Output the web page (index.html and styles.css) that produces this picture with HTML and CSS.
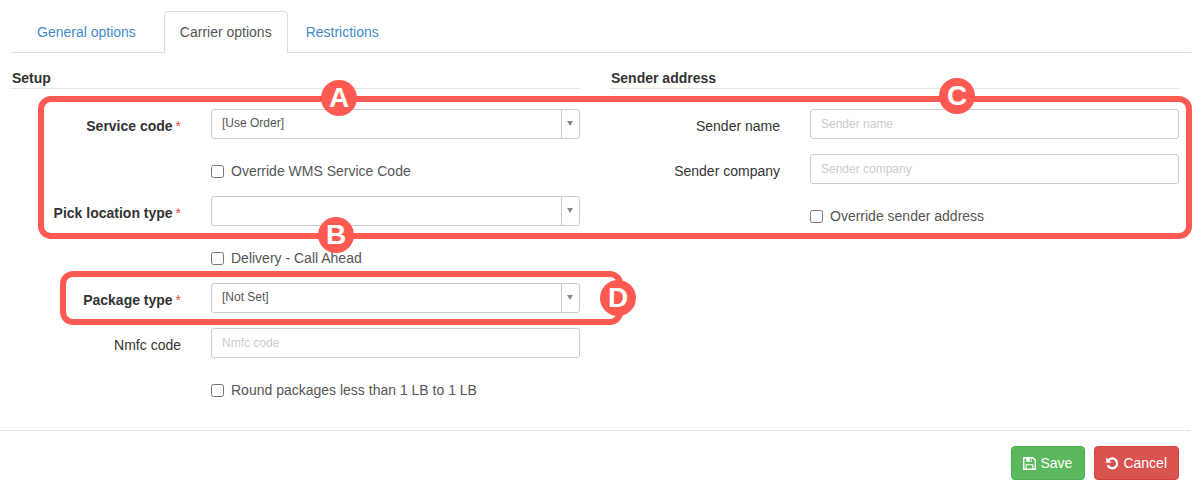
FILE: index.html
```html
<!DOCTYPE html>
<html lang="en">
<head>
<meta charset="utf-8">
<title>Carrier options</title>
<link rel="stylesheet" href="styles.css">
</head>
<body>
<div class="page">
  <nav class="tabs">
    <a class="tab tab-first" href="#">General options</a>
    <a class="tab active" href="#">Carrier options</a>
    <a class="tab" href="#">Restrictions</a>
  </nav>
  <div class="columns">
    <section class="col">
      <h3 class="section-title">Setup</h3>
      <div class="row">
        <label class="lbl req">Service code <span class="star">*</span></label>
        <div class="select"><span class="value">[Use Order]</span><span class="arrow"></span></div>
      </div>
      <div class="row check-row"><div></div><label class="check"><input type="checkbox"><span>Override WMS Service Code</span></label></div>
      <div class="row">
        <label class="lbl req">Pick location type <span class="star">*</span></label>
        <div class="select"><span class="value"></span><span class="arrow"></span></div>
      </div>
      <div class="row check-row"><div></div><label class="check"><input type="checkbox"><span>Delivery - Call Ahead</span></label></div>
      <div class="row">
        <label class="lbl req">Package type <span class="star">*</span></label>
        <div class="select"><span class="value">[Not Set]</span><span class="arrow"></span></div>
      </div>
      <div class="row">
        <label class="lbl">Nmfc code</label>
        <input class="text" type="text" placeholder="Nmfc code">
      </div>
      <div class="row check-row"><div></div><label class="check"><input type="checkbox"><span>Round packages less than 1 LB to 1 LB</span></label></div>
    </section>
    <section class="col">
      <h3 class="section-title">Sender address</h3>
      <div class="row">
        <label class="lbl">Sender name</label>
        <input class="text" type="text" placeholder="Sender name">
      </div>
      <div class="row">
        <label class="lbl">Sender company</label>
        <input class="text" type="text" placeholder="Sender company">
      </div>
      <div class="row check-row"><div></div><label class="check"><input type="checkbox"><span>Override sender address</span></label></div>
    </section>
  </div>
  <footer class="footer">
    <button class="btn btn-save" type="button">
      <svg class="icon" viewBox="0 0 12 12" aria-hidden="true"><path fill="none" stroke="#fff" stroke-width="1.3" d="M.7.7h8.4l2.2 2.2v8.4H.7z"/><path fill="#fff" d="M3 .7h5v3.6H3zM2.4 6.6h7.2v4.8H2.4z"/><path fill="#5cb85c" d="M6.2 1.3h1.2v2.4H6.2zM3.4 7.6h5.2v3H3.4z"/></svg>Save
    </button>
    <button class="btn btn-cancel" type="button">
      <svg class="icon" viewBox="0 0 12 12" aria-hidden="true"><path fill="none" stroke="#fff" stroke-width="2.1" d="M2.2 3.1A4.5 4.5 0 1 1 1.6 7.6"/><path fill="#fff" d="M.2.4l5 5H.2z"/></svg>Cancel
    </button>
  </footer>
  <div class="mark mark-abc"></div>
  <div class="mark mark-d"></div>
  <span class="badge badge-a">A</span>
  <span class="badge badge-b">B</span>
  <span class="badge badge-c">C</span>
  <span class="badge badge-d">D</span>
</div>
</body>
</html>
```
FILE: styles.css
```css
* { box-sizing: border-box; }
html, body { margin: 0; padding: 0; background: #fff; }
body { font-family: "Liberation Sans", Arial, sans-serif; font-size: 14px; color: #333; }
.page { position: relative; width: 1203px; height: 499px; overflow: hidden; }

.tabs { display: flex; align-items: flex-end; width: 1180px; height: 42px; margin: 11px 0 0 11px; padding-left: 10px; border-bottom: 1px solid #ddd; }
.tab { display: block; height: 41px; margin-right: 2px; padding: 0 15px; line-height: 41px; color: #428bca; text-decoration: none; border: 1px solid transparent; border-bottom: 0; border-radius: 4px 4px 0 0; }
.tab-first { margin-right: 12px; }
.tab.active { height: 42px; margin-bottom: -1px; background: #fff; color: #555; border-color: #ddd; }

.columns { display: flex; gap: 30px; margin-left: 11px; }
.col { width: 569px; }
.section-title { height: 36px; margin: 0 0 20px; padding: 17px 0 0 1px; font-size: 14px; line-height: 16px; font-weight: 700; color: #333; border-bottom: 1px solid #e5e5e5; }

.row { display: grid; grid-template-columns: 170px 369px; column-gap: 30px; min-height: 30px; margin-bottom: 15px; }
.lbl { padding-top: 9px; line-height: 16px; text-align: right; color: #333; }
.lbl.req { font-weight: 700; }
.star { margin-left: -1px; font-weight: 400; color: #e74c3c; }

.select { display: flex; align-items: stretch; height: 30px; border: 1px solid #ccc; border-radius: 3px; background: #fff; }
.value { flex: 1; padding-left: 10px; font-size: 12px; line-height: 27px; color: #555; }
.arrow { position: relative; width: 18px; border-left: 1px solid #ccc; }
.arrow::after { content: ""; position: absolute; left: 5px; top: 11px; border: 3.5px solid transparent; border-top: 5px solid #888; border-bottom: 0; }

.text { display: block; width: 369px; height: 30px; padding: 0 10px; border: 1px solid #ccc; border-radius: 3px; font-family: inherit; font-size: 12px; color: #555; background: #fff; outline: 0; }
.text::placeholder { color: #ccc; opacity: 1; }

.check-row { min-height: 27px; }
.check { display: flex; align-items: center; height: 16px; margin-top: 9px; color: #555; }
.check input { width: 13px; height: 13px; margin: 0 7px 0 0; }

.footer { display: flex; justify-content: flex-end; gap: 9px; width: 1190px; height: 69px; margin-top: 15px; padding: 15px 11px 0 0; border-top: 1px solid #e5e5e5; }
.btn { display: flex; align-items: center; height: 34px; padding: 0 11px; border: 1px solid; border-radius: 4px; font-family: inherit; font-size: 14px; color: #fff; }
.btn-save { padding-right: 12px; background: #5cb85c; border-color: #4cae4c; }
.btn-cancel { background: #d9534f; border-color: #d43f3a; }
.icon { width: 13px; height: 13px; margin-right: 4px; flex: none; }

.mark { position: absolute; border: 6px solid #ff5a52; border-radius: 13px; pointer-events: none; }
.mark-abc { left: 38px; top: 96px; width: 1154px; height: 143px; }
.mark-d { left: 60px; top: 271px; width: 563px; height: 54px; }

.badge { position: absolute; width: 36px; height: 36px; border-radius: 50%; background: #ff5a52; color: #fff; font-size: 28px; font-weight: 700; line-height: 36px; text-align: center; }
.badge-a { left: 321px; top: 80px; }
.badge-b { left: 318px; top: 217px; }
.badge-c { left: 939px; top: 78px; }
.badge-d { left: 600px; top: 280px; }
```
